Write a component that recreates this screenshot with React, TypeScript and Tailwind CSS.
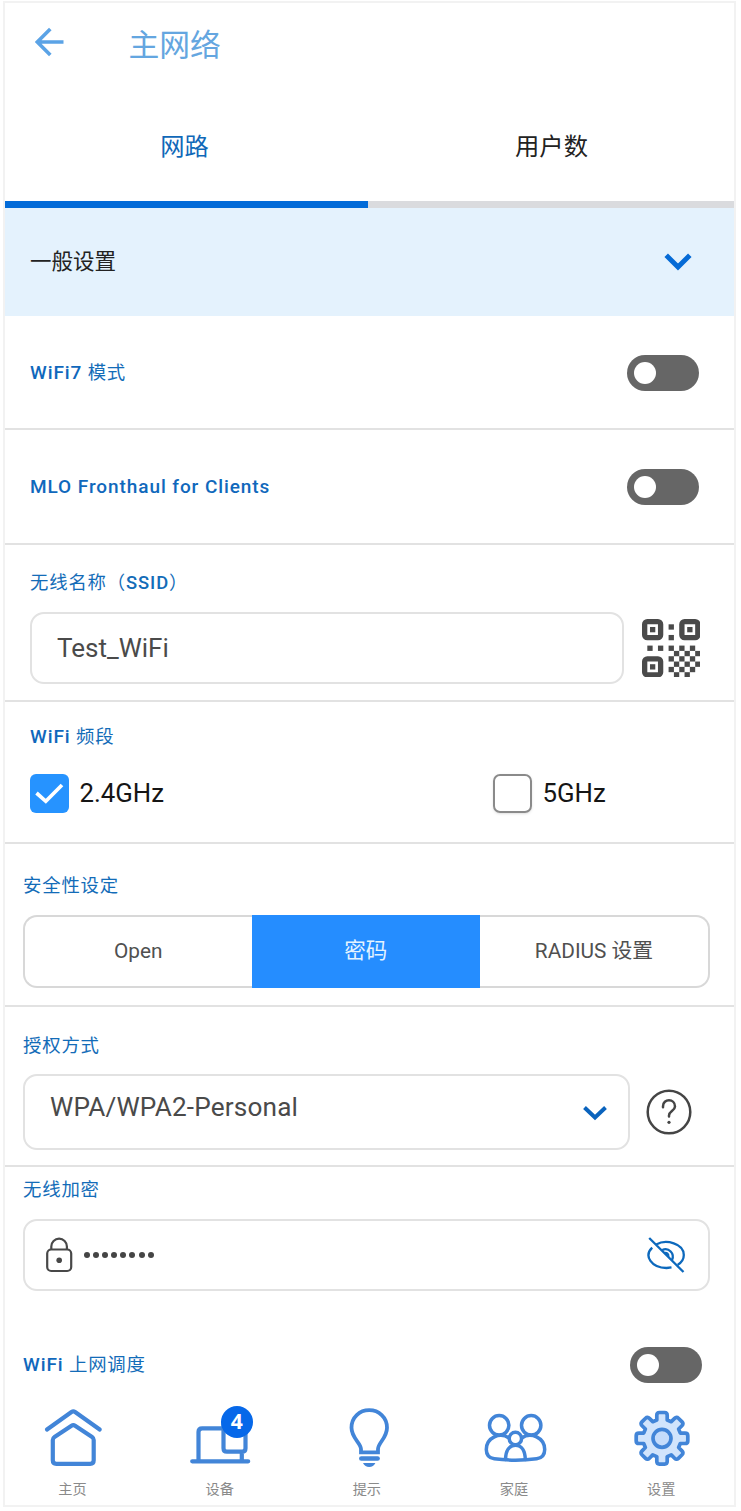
import React from 'react';

const sans = "font-['Roboto','Noto_Sans_CJK_SC',sans-serif]";

function Label({ latin, children }: { latin?: string; children?: React.ReactNode }) {
  return (
    <div className="whitespace-nowrap text-[18.4px] leading-6 tracking-[0.8px] text-[#136cb8]">
      {latin && <span className="text-[19px] font-medium tracking-[0.92px] text-[#1068bc]">{latin}</span>}
      {latin && children ? ' ' : null}
      {children}
    </div>
  );
}

function Toggle() {
  return (
    <button role="switch" aria-checked="false" className="flex h-9 w-[72px] shrink-0 items-center rounded-full bg-[#666666] pl-[7px]">
      <span className="size-[22px] rounded-full bg-white" />
    </button>
  );
}

function QrIcon() {
  const cells = [
    [5, 1], [5, 3], [1, 5], [3, 5],
    [5, 5], [7, 5], [9, 5], [6, 6], [8, 6], [10, 6],
    [5, 7], [7, 7], [9, 7], [6, 8], [8, 8], [10, 8],
    [5, 9], [7, 9], [9, 9], [6, 10], [8, 10],
  ];
  return (
    <svg className="size-[58.500px]" viewBox="0 0 11 11" fill="#4a4a4a">
      {[[0, 0], [7, 0], [0, 7]].map(([x, y]) => (
        <g key={`${x}-${y}`}>
          <rect x={x + 0.5} y={y + 0.5} width="3" height="3" rx="0.5" fill="none" stroke="#4a4a4a" />
          <rect x={x + 1.5} y={y + 1.5} width="1" height="1" />
        </g>
      ))}
      {cells.map(([x, y]) => <rect key={`${x}-${y}`} x={x} y={y} width="1" height="1" />)}
    </svg>
  );
}

function gearPath() {
  const pts: string[] = [];
  for (let i = 0; i < 8; i++) {
    const a = (i * Math.PI) / 4;
    const at = (along: number, side: number) =>
      `${(along * Math.cos(a) - side * Math.sin(a)).toFixed(2)} ${(along * Math.sin(a) + side * Math.cos(a)).toFixed(2)}`;
    pts.push(`${i ? 'L' : 'M'}${at(18.3, -5.2)}L${at(23, -5.2)}Q${at(25.8, -5.2)} ${at(25.8, -2.6)}L${at(25.8, 2.6)}Q${at(25.8, 5.2)} ${at(23, 5.2)}L${at(18.3, 5.2)}`);
  }
  return pts.join('') + 'Z';
}

function NavItem({ label, children }: { label: string; children: React.ReactNode }) {
  return (
    <a className="flex w-[135px] shrink-0 flex-col items-center">
      {children}
      <span className="mt-[9px] text-[14.2px] leading-5 text-[#8a8a8a]">{label}</span>
    </a>
  );
}

const stroke = { fill: 'none', stroke: '#4285d8', strokeLinecap: 'round' as const, strokeLinejoin: 'round' as const };

export default function App() {
  return (
    <div className={`h-[1511px] w-[741px] bg-white pl-[3px] pt-px ${sans}`}>
      <div className="flex h-[1506px] w-[733px] flex-col border-2 border-[#f2f2f2]">
        <header className="flex h-[88px] shrink-0 items-start pl-[30px]">
          <svg className="mt-[24px] h-[30px] w-[30px]" viewBox="0 0 30 30" fill="none" stroke="#5ba3e6" strokeWidth="3.6">
            <path d="M28.500 15H3M15.300 2 2.300 15l13 13" />
          </svg>
          <h1 className="ml-[63.500px] mt-[25px] text-[30.8px] leading-9 text-[#64a6e0]">主网络</h1>
        </header>

        <nav className="flex h-[117px] shrink-0">
          <div className="flex w-[363px] flex-col border-b-[7px] border-[#026bd8]">
            <span className="mt-[38px] pr-1 text-center text-[24.3px] leading-9 text-[#1068b8]">网路</span>
          </div>
          <div className="flex flex-1 flex-col border-b-[7px] border-[#dadbde]">
            <span className="mt-[38px] pl-px text-center text-[24.3px] leading-9 text-[#222222]">用户数</span>
          </div>
        </nav>

        <section className="flex h-[108px] shrink-0 items-center justify-between bg-[#e4f2fd] pl-[25px] pr-[42px]">
          <h2 className="text-[21.5px] text-[#222222]">一般设置</h2>
          <svg className="h-[18px] w-[28px]" viewBox="0 0 28 18" fill="none" stroke="#056bd6" strokeWidth="5">
            <path d="M2.2 2.3 14 14 25.800 2.300" />
          </svg>
        </section>

        <section className="flex h-[114px] shrink-0 items-center justify-between border-b-2 border-[#e2e2e2] pl-[25px] pr-[35px] pt-px">
          <Label latin="WiFi7">模式</Label>
          <Toggle />
        </section>
        <section className="flex h-[115px] shrink-0 items-center justify-between border-b-2 border-[#e2e2e2] pl-[25px] pr-[35px] pt-px">
          <Label latin="MLO Fronthaul for Clients" />
          <Toggle />
        </section>

        <section className="h-[157px] shrink-0 border-b-2 border-[#e2e2e2] pl-[25px] pt-[26px]">
          <Label>无线名称（<span className="font-medium tracking-[0.9px]">SSID</span>）</Label>
          <div className="mt-[17px] flex items-center gap-[17.500px]">
            <div className="flex h-[72px] w-[594px] items-center rounded-[14px] border-2 border-[#e2e2e2] pl-[25px] text-[26px] text-[#4a4a4a]">Test_WiFi</div>
            <QrIcon />
          </div>
        </section>

        <section className="h-[142px] shrink-0 border-b-2 border-[#e2e2e2] pl-[25px] pt-[23px]">
          <Label latin="WiFi">频段</Label>
          <div className="mt-[25px] flex">
            <label className="flex w-[463px] items-center gap-[10.500px] text-[25.8px] text-[#151515]">
              <span className="flex size-[39px] items-center justify-center rounded-[6px] bg-[#2693ff]">
                <svg className="h-[21px] w-[29px]" viewBox="0 0 29 21" fill="none" stroke="white" strokeWidth="3.700">
                  <path d="M1.500 10 10.800 18.300 27 2" />
                </svg>
              </span>
              2.4GHz
            </label>
            <label className="flex items-center gap-[10.500px] text-[25.8px] text-[#151515]">
              <span className="size-[39px] rounded-[7px] border-2 border-[#8a8a8a] shadow-sm" />
              5GHz
            </label>
          </div>
        </section>

        <section className="h-[163px] shrink-0 border-b-2 border-[#e2e2e2] pl-[18px] pt-[30px]">
          <Label>安全性设定</Label>
          <div className="mt-[17px] flex h-[73px] w-[687px] text-[20.800px] text-[#505050]">
            <div className="flex w-[228.500px] items-center justify-center rounded-l-[14px] border-2 border-r-0 border-[#d8d8d8]">Open</div>
            <div className="flex w-[228.500px] items-center justify-center bg-[#258dff] text-[21.500px] text-[#e4f3ff]">密码</div>
            <div className="flex flex-1 items-center justify-center rounded-r-[14px] border-2 border-l-0 border-[#d8d8d8]">RADIUS 设置</div>
          </div>
        </section>

        <section className="h-[160px] shrink-0 border-b-2 border-[#e2e2e2] pl-[18px] pt-[27px]">
          <Label>授权方式</Label>
          <div className="mt-[16px] flex items-center gap-4">
            <div className="flex h-[76px] w-[607px] justify-between rounded-[14px] border-2 border-[#e2e2e2] pl-[25px] pr-[20px] text-[26.2px] tracking-[0.15px] text-[#4a4a4a]">
              <span className="mt-[12px]">WPA/WPA2-Personal</span>
              <svg className="mt-[29px] h-[16px] w-[26px]" viewBox="0 0 26 16" fill="none" stroke="#0a63bd" strokeWidth="4">
                <path d="M2.500 2.500 13 12.500 23.500 2.500" />
              </svg>
            </div>
            <svg className="size-[46px]" viewBox="0 0 46 46" fill="none" stroke="#454545" strokeWidth="2.500" strokeLinecap="round">
              <circle cx="23" cy="23" r="21.300" />
              <path d="M17 18.300v-1c0-8 12-8 12 .1 0 4.300-6 5-6 9v1" />
              <circle cx="23" cy="33.300" r="1.600" fill="#454545" stroke="none" />
            </svg>
          </div>
        </section>

        <section className="h-[124px] shrink-0 pl-[18px] pt-[11px]">
          <Label>无线加密</Label>
          <div className="mt-[17px] flex h-[72px] w-[687px] items-center rounded-[14px] border-2 border-[#e2e2e2] pl-[20px] pr-[22px]">
            <svg className="h-[36px] w-[28px]" viewBox="0 0 28 36" fill="none" stroke="#484848" strokeWidth="2.200">
              <rect x="2.200" y="12.500" width="24" height="21.500" rx="4" />
              <path d="M6.300 12v-2.500a7.800 7.800 0 0 1 15.600 0V12" />
              <circle cx="14.200" cy="23.300" r="2.800" fill="#484848" stroke="none" />
            </svg>
            <div className="ml-[11px] flex flex-1 gap-[3.100px]">
              {Array.from({ length: 8 }, (_, i) => <span key={i} className="size-[6px] rounded-full bg-[#454545]" />)}
            </div>
            <svg className="h-[38px] w-[40px]" viewBox="646.500 1236 40 38" fill="none" stroke="#0d69bd" strokeWidth="2.300">
              <path d="M649.700 1238 684 1272M656.700 1244.400c10-5.500 27.600-1 27.600 10.600 0 4-2.300 7.500-6 9.700M652.700 1247.700c-8.700 8.300-.7 20.300 14.300 20.300l5-.7" />
              <path d="M662.700 1250c6.500-3 12.800 3.500 9.800 10M664.500 1253c3-.7 4.700 1 4.300 4" />
            </svg>
          </div>
        </section>

        <section className="flex h-[109px] shrink-0 items-start justify-between pl-[18px] pr-[32px] pt-[56px]">
          <div className="pt-[6px]"><Label latin="WiFi">上网调度</Label></div>
          <Toggle />
        </section>

        <footer className="flex shrink-0 gap-[12.200px]">
          <NavItem label="主页">
            <svg className="h-[70px] w-[68px]" viewBox="39 1400 68 70" strokeWidth="4.200" {...stroke}>
              <path d="M47 1429.500 71.500 1412q1.800-1.200 3.600 0L99.700 1429.500" />
              <path d="M52.800 1440q0-2 1.700-3.100l17-11.200q1.800-1.200 3.600 0l17 11.200q1.600 1.100 1.600 3.100v20.300q0 3.500-3.500 3.500H56.300q-3.500 0-3.500-3.500Z" />
            </svg>
          </NavItem>
          <NavItem label="设备">
            <div className="relative">
              <svg className="h-[70px] w-[68px]" viewBox="185.500 1400 68 70" strokeWidth="4.200" {...stroke}>
                <path d="M198 1461v-29q0-3.700 3.700-3.700H223M191.700 1461.300h56M241.300 1452v9M223 1424v24.300q0 3.400 3.400 3.400h15.200q3.400 0 3.400-3.400V1424" />
              </svg>
              <span className="absolute left-[35px] top-[6px] flex size-8 items-center justify-center rounded-full bg-[#0668e9] font-['Open_Sans'] text-[21px] font-bold text-white">4</span>
            </div>
          </NavItem>
          <NavItem label="提示">
            <svg className="h-[70px] w-[68px]" viewBox="332.500 1400 68 70" strokeWidth="3.800" {...stroke} strokeLinejoin="miter">
              <path d="M360.500 1452.300V1449c0-6-9.500-11-9.500-21.300 0-10.500 8-17.500 17.700-17.500s17.800 7 17.800 17.500c0 10.300-9 15.300-9 21.300v3.300Z" />
              <path d="M360.800 1458.500h16.300" strokeWidth="4.600" />
              <path d="M362.500 1463h12.400q-2 4-6.200 4t-6.200-4Z" fill="#4285d8" stroke="none" />
            </svg>
          </NavItem>
          <NavItem label="家庭">
            <svg className="h-[70px] w-[68px]" viewBox="480.500 1400 68 70" strokeWidth="3.500" {...stroke}>
              <circle cx="499.700" cy="1425.300" r="9.700" />
              <circle cx="531.700" cy="1425.300" r="9.700" />
              <circle cx="515.900" cy="1438.500" r="6.200" />
              <path d="M509.500 1438c-9-6.500-22.700-.5-22.700 11.500 0 5.500 2.500 8.500 8 9.300 14 1.800 28.400 1.800 42.400 0 5.500-.8 8-3.800 8-9.300 0-12-14-18-23-11.500" />
              <path d="M506 1459.500c.2-8.500 3.500-14.200 9.900-14.200s9.700 5.700 9.900 14.200" />
            </svg>
          </NavItem>
          <NavItem label="设置">
            <svg className="h-[70px] w-[68px]" viewBox="-35 -38.300 68 70" strokeWidth="3.700" {...stroke}>
              <path d={gearPath()} fill="#d1e4fc" />
              <circle r="9" fill="#c5dcfb" />
            </svg>
          </NavItem>
        </footer>
      </div>
    </div>
  );
}
